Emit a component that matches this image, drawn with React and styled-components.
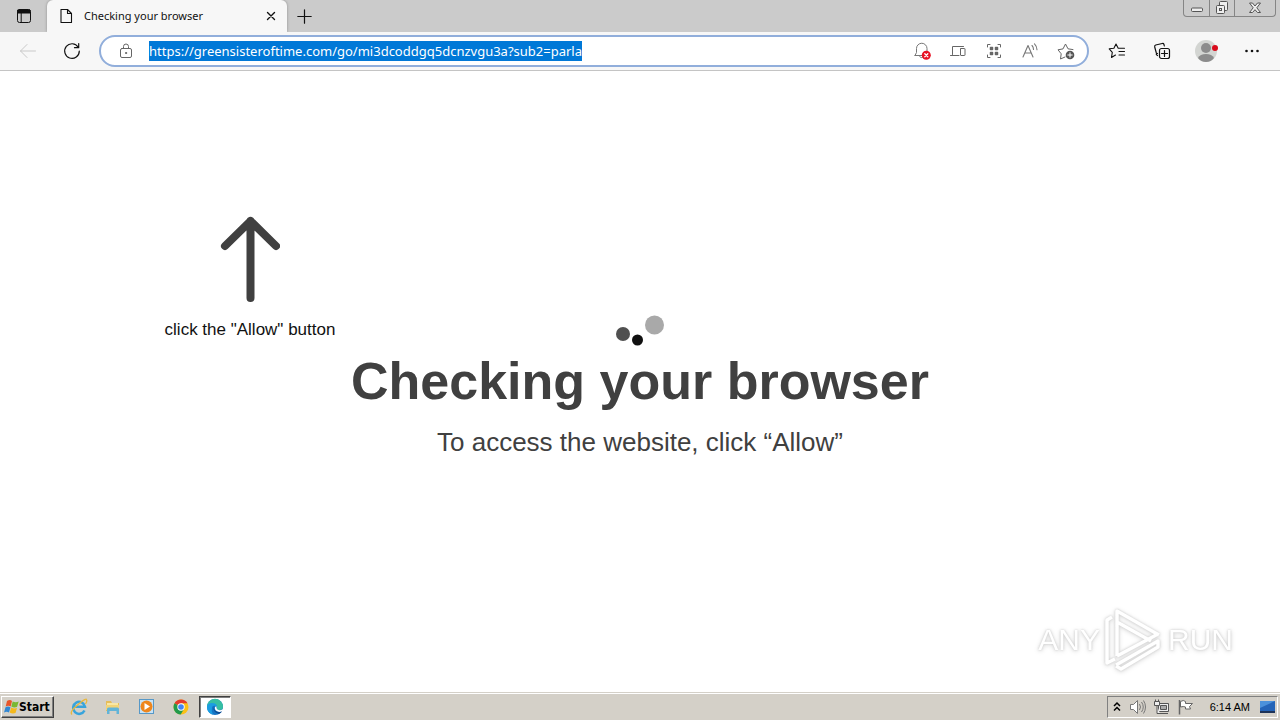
import React from 'react'
import styled, { createGlobalStyle } from 'styled-components'

const GlobalStyle = createGlobalStyle`
  * {
    box-sizing: border-box;
  }
  body {
    margin: 0;
    background: #fff;
    font-family: "Noto Sans", "Open Sans", sans-serif;
  }
  button {
    border: 0;
    padding: 0;
    background: none;
    color: inherit;
    font: inherit;
  }
  svg {
    display: block;
    flex: none;
  }
`

const Screen = styled.div`
  display: flex;
  flex-direction: column;
  min-height: 100vh;
`

/* tab strip */
const TabStrip = styled.div`
  display: flex;
  align-items: flex-start;
  height: 32px;
  background: #cbcbcb;
`

const StripButton = styled.button`
  display: flex;
  align-items: center;
  justify-content: center;
  width: ${props => props.$wide ? '47px' : '34px'};
  height: 32px;
`

const Tab = styled.div`
  display: flex;
  align-items: center;
  width: 240px;
  height: 32px;
  padding: 0 8px 0 12px;
  border-radius: 6px 6px 0 0;
  background: #f7f7f7;
  box-shadow: 0 0 3px #8c8c8c;
  clip-path: inset(0 -4px);
`

const TabTitle = styled.span`
  flex: 1;
  margin-left: 11px;
  color: #111;
  font-size: 11px;
  line-height: 16px;
  white-space: nowrap;
`

const CloseTab = styled.button`
  display: flex;
  align-items: center;
  justify-content: center;
  width: 16px;
  height: 16px;
`

const WindowButtons = styled.div`
  display: flex;
  margin-left: auto;
  margin-right: 4px;
  height: 17px;
  border: 1px solid #858585;
  border-top: 0;
  border-radius: 0 0 4px 4px;
`

const WindowButton = styled.button`
  display: flex;
  align-items: center;
  justify-content: center;
  width: ${props => props.$wide ? '41px' : '25px'};
  border-left: 1px solid #858585;

  &:first-child {
    border-left: 0;
  }
`

/* toolbar */
const Toolbar = styled.div`
  display: flex;
  align-items: center;
  height: 39px;
  padding: 0 10px;
  border-bottom: 1px solid #c4c4c4;
  background: #f7f7f7;
`

const ToolButton = styled.button`
  display: flex;
  align-items: center;
  justify-content: center;
  width: 36px;
  height: 30px;
`

const NavButtons = styled.div`
  display: flex;
  gap: 8px;
  margin-right: 9px;
`

const AddressBar = styled.div`
  display: flex;
  flex: 1;
  align-items: center;
  height: 32px;
  padding: 0 3px 0 17px;
  border: 2px solid #91aedb;
  border-radius: 16px;
  background: #fff;
`

const AddressField = styled.div`
  display: flex;
  flex: 1;
  min-width: 0;
  margin-left: 15px;
`

const AddressInput = styled.input`
  max-width: 100%;
  height: 20px;
  padding: 0;
  border: 0;
  outline: 0;
  background: #0078d7;
  color: #fff;
  font-family: "Noto Sans", "Open Sans", sans-serif;
  font-size: 13px;
  line-height: 20px;
  field-sizing: content;
`

const MenuButtons = styled.div`
  display: flex;
  gap: 9px;
  margin-left: 10px;
`

/* page */
const Page = styled.main`
  position: relative;
  flex: 1;
  padding-top: 145px;
  color: #404040;
  font-family: "Liberation Sans", Arial, sans-serif;
  text-align: center;
`

const TopRow = styled.div`
  display: grid;
  grid-template-columns: 1fr auto 1fr;
  align-items: end;
`

const Hint = styled.div`
  display: flex;
  flex-direction: column;
  align-items: center;
  justify-self: start;
  width: 180px;
  margin-left: 160px;
  padding-bottom: 7px;
`

const HintText = styled.p`
  margin: 17px 0 0;
  color: #111;
  font-size: 17px;
  line-height: 20px;
  white-space: nowrap;
`

const Title = styled.h1`
  margin: 4px 0 0;
  font-size: 52px;
  line-height: 60px;
`

const Subtitle = styled.p`
  margin: 16px 0 0;
  font-size: 26px;
  line-height: 30px;
`

const Watermark = styled.div`
  position: absolute;
  right: 47px;
  bottom: 20px;
  display: flex;
  align-items: center;
  gap: 4px;
  color: #fff;
  font-size: 30px;
  line-height: 62px;
  filter: drop-shadow(0 0 1px #ccc) drop-shadow(0 1px 2px #ddd);
`

/* taskbar */
const Taskbar = styled.footer`
  display: flex;
  align-items: center;
  height: 28px;
  padding: 1px 2px 0 1px;
  border-top: 1px solid #d4d0c8;
  background: #d4d0c8;
  box-shadow: inset 0 1px #fff;
  color: #000;
  font-family: "DejaVu Sans Condensed", "DejaVu Sans", sans-serif;
`

const StartButton = styled.button`
  display: flex;
  align-items: center;
  height: 22px;
  padding: 0 3px 0 1px;
  border: 1px solid;
  border-color: #fff #404040 #404040 #fff;
  box-shadow: inset -1px -1px #808080;
  font-size: 12px;
  font-weight: bold;
`

const Launchers = styled.div`
  display: flex;
  gap: 2px;
  margin-left: 9px;
`

const Launcher = styled.button`
  display: flex;
  align-items: center;
  justify-content: center;
  width: 32px;
  height: 22px;
  border: 1px solid transparent;
  ${props => props.$active && `
    background: #fff;
    border-color: #404040 #fff #fff #404040;
    box-shadow: inset 1px 1px #808080;
  `}
`

const Tray = styled.div`
  display: flex;
  align-items: center;
  height: 22px;
  margin-left: auto;
  padding: 0 1px 0 3px;
  border: 1px solid;
  border-color: #808080 #fff #fff #808080;
`

const TrayButton = styled.button`
  display: flex;
  align-items: center;
  justify-content: center;
  width: ${props => props.$small ? '12px' : '24px'};
  height: 20px;
  margin-right: ${props => props.$small ? '3px' : '0'};
`

const Clock = styled.time`
  margin: 0 9px 0 12px;
  font-family: "Liberation Sans", Arial, sans-serif;
  font-size: 11px;
  line-height: 16px;
  white-space: nowrap;
`

const Icon = ({ size = 18, width = 1, color = '#111', children }) => (
  <svg width={size} height={size} viewBox={`0 0 ${size} ${size}`} fill="none" stroke={color}
    strokeWidth={width} strokeLinecap="round" strokeLinejoin="round" aria-hidden="true">
    {children}
  </svg>
)

const BrowserTabs = () => (
  <TabStrip>
    <StripButton $wide aria-label="Tab actions menu">
      <Icon>
        <rect x="2.5" y="2.5" width="13" height="13" rx="2" />
        <path d="M3 3h12v3H3z" fill="#111" />
        <path d="M6.2 6v9.5" />
      </Icon>
    </StripButton>
    <Tab>
      <Icon size={14} width={1.1}>
        <path d="M2 .5h6.5l4 4v9H2zM8.5 .5v4h4" />
      </Icon>
      <TabTitle>Checking your browser</TabTitle>
      <CloseTab aria-label="Close tab">
        <Icon size={10} width={1.4}><path d="M1.5 1.5l7 7M8.5 1.5l-7 7" /></Icon>
      </CloseTab>
    </Tab>
    <StripButton aria-label="New tab">
      <Icon size={15} width={1.2}><path d="M7.5 .8v13.4M.8 7.5h13.4" /></Icon>
    </StripButton>
    <WindowButtons>
      <WindowButton aria-label="Minimize">
        <svg width="14" height="12" fill="#eee" stroke="#555"><rect x="1.5" y="6" width="11" height="3.5" rx="1" /></svg>
      </WindowButton>
      <WindowButton aria-label="Restore">
        <svg width="14" height="14" fill="#eee" stroke="#555">
          <rect x="4.5" y=".5" width="8" height="9" rx="1" />
          <rect x="1.5" y="4.5" width="8" height="8" rx="1" />
          <rect x="4.5" y="7.5" width="2" height="2" />
        </svg>
      </WindowButton>
      <WindowButton $wide aria-label="Close">
        <svg width="14" height="12" fill="#eee" stroke="#555">
          <path d="M1.5 1h3L7 4l2.500-3h3L8.800 5.800l3.700 4.700h-3L7 7.700l-2.500 2.800h-3l3.700-4.700z" />
        </svg>
      </WindowButton>
    </WindowButtons>
  </TabStrip>
)

const BrowserToolbar = () => (
  <Toolbar>
    <NavButtons>
      <ToolButton aria-label="Back">
        <Icon color="#c9c9c9"><path d="M16.5 9h-15M8 2.500L1.500 9 8 15.500" /></Icon>
      </ToolButton>
      <ToolButton aria-label="Refresh">
        <Icon width={1.2}>
          <path d="M15.200 5.200A7.300 7.300 0 1 0 16.300 9M15.700 1.500v4.200h-4.200" />
        </Icon>
      </ToolButton>
    </NavButtons>
    <AddressBar>
      <Icon color="#666" size={16}>
        <rect x="2.500" y="5.500" width="11" height="9" rx="1.500" />
        <path d="M5.500 5.500V3.500a2.500 2.500 0 0 1 5 0v2" />
        <circle cx="8" cy="10" r=".6" fill="#666" />
      </Icon>
      <AddressField>
        <AddressInput aria-label="Address and search bar" defaultValue="https://greensisteroftime.com/go/mi3dcoddgq5dcnzvgu3a?sub2=parla" />
      </AddressField>
      <ToolButton aria-label="Notifications blocked">
        <Icon color="#777">
          <path d="M2 13.500h8M2 13.500l1.500-3v-4a5 5 0 0 1 10.500 0V9M6.500 14a2 2 0 0 0 3 1.500" />
          <circle cx="13.300" cy="13.300" r="4.500" fill="#e81123" stroke="none" />
          <path d="M11.800 11.800l3 3M14.800 11.800l-3 3" stroke="#fff" strokeWidth="1.300" />
        </Icon>
      </ToolButton>
      <ToolButton aria-label="App available">
        <Icon color="#666">
          <path d="M3.500 12.500v-8h11M1.500 13.500h8.500" />
          <rect x="11.500" y="6.500" width="4.500" height="7" rx=".5" />
        </Icon>
      </ToolButton>
      <ToolButton aria-label="QR code">
        <Icon color="#666">
          <path d="M2.500 5V2.500H5M13 2.500h2.500V5M15.500 13v2.500H13M5 15.500H2.500V13" />
          <path d="M5.500 5.500h2v2h-2zM10.500 5.500h2v2h-2zM5.500 10.500h2v2h-2zM10.500 10.500h2v2h-2z" fill="#777" strokeWidth="1.500" />
        </Icon>
      </ToolButton>
      <ToolButton aria-label="Read aloud">
        <Icon color="#777" width={1.1}>
          <path d="M2 15L7 3.500 12 15M3.700 11h6.600M11 3.500q1.500 1.500 1.500 4M13.500 1.800q2.500 2.500 2.500 6" />
        </Icon>
      </ToolButton>
      <ToolButton aria-label="Add to favorites">
        <Icon color="#666">
          <path d="M8 15l-4.500 2 .7-5.200L1 7.800l5-.9L8.500 2 11 6.800l5 .8" />
          <circle cx="13" cy="13" r="4.300" fill="#555" stroke="none" />
          <path d="M13 10.800v4.400M10.800 13h4.400" stroke="#fff" />
        </Icon>
      </ToolButton>
    </AddressBar>
    <MenuButtons>
      <ToolButton aria-label="Favorites">
        <Icon width={1.1}>
          <path d="M7.500 13l-4 2.500.8-5.200L1.200 6.800l4.700-.6L8 2l2.200 4.200h6.300M11 9.500h5.500M11 13h5.500" />
        </Icon>
      </ToolButton>
      <ToolButton aria-label="Collections">
        <Icon width={1.2}>
          <path d="M4.500 11.500q-1 0-1.300-1L1.700 5q-.4-1.500 1-2l6.500-1.500q1.400-.3 1.800 1l.3 1.500M4.500 13.500q-1-.5-1.300-1.500" />
          <rect x="6.500" y="6.500" width="10" height="10" rx="2" />
          <path d="M11.500 8.500v6M8.500 11.500h6" />
        </Icon>
      </ToolButton>
      <ToolButton aria-label="Profile">
        <svg width="26" height="24" aria-hidden="true">
          <circle cx="12" cy="12" r="11" fill="#d3d5d2" />
          <circle cx="12" cy="9" r="5" fill="#8c8c8c" />
          <path d="M4 19q2-4 8-4t8 4q-3 4-8 4t-8-4z" fill="#8c8c8c" />
          <circle cx="21" cy="9" r="3" fill="#d90b1c" />
        </svg>
      </ToolButton>
      <ToolButton aria-label="Settings and more">
        <Icon width={0}>
          <g fill="#111"><circle cx="3.500" cy="9" r="1.300" /><circle cx="9" cy="9" r="1.300" /><circle cx="14.500" cy="9" r="1.300" /></g>
        </Icon>
      </ToolButton>
    </MenuButtons>
  </Toolbar>
)

const PageContent = () => (
  <Page>
    <TopRow>
      <Hint>
        <svg width="60" height="87" fill="none" stroke="#404040" strokeWidth="8" strokeLinecap="round" strokeLinejoin="round" aria-hidden="true">
          <path d="M30.500 82V5M5 30L30.500 5 56 30" />
        </svg>
        <HintText>click the "Allow" button</HintText>
      </Hint>
      <svg width="50" height="32" aria-label="Loading" role="img">
        <circle cx="8" cy="19" r="7" fill="#505050" />
        <circle cx="22.500" cy="25" r="5.500" fill="#101010" />
        <circle cx="39.500" cy="10" r="9.500" fill="#a9a9a9" />
      </svg>
    </TopRow>
    <Title>Checking your browser</Title>
    <Subtitle>To access the website, click “Allow”</Subtitle>
    <Watermark>
      <span>ANY</span>
      <svg width="60" height="64" fill="none" stroke="#fff" strokeWidth="3.500" strokeLinejoin="round" aria-hidden="true">
        <path d="M13 48V3l42 24M13 14l34 19M13 48l41-22" />
        <path d="M8 9l-5 3v43l8-4M12 58l5 3 37-22v-6L12 57" />
      </svg>
      <span>RUN</span>
    </Watermark>
  </Page>
)

const WindowsTaskbar = () => (
  <Taskbar>
    <StartButton>
      <svg width="16" height="16" aria-hidden="true">
        <path d="M4 2q3-2 5 0L7.700 7.500q-2.500-1.500-5 0z" fill="#e8562a" />
        <path d="M9.700 2.500q3 1.500 6 0L14 8q-3 1.200-5.700-.5z" fill="#7ab833" />
        <path d="M2.500 8.200q2.500-1.500 5 0L6 13.500q-2.500-1.500-5 0z" fill="#3187d3" />
        <path d="M8.200 8.500q3 1.500 5.800.5l-1.500 5q-3 1.200-5.800-.5z" fill="#f5b91c" />
      </svg>
      Start
    </StartButton>
    <Launchers>
      <Launcher aria-label="Internet Explorer">
        <svg width="18" height="18" fill="none" aria-hidden="true">
          <path d="M14.500 12.500A6 6 0 1 1 15 8.800H4" stroke="#38a4dc" strokeWidth="2.500" />
          <path d="M2 16.500Q-1 14 8 6.500T16.500 2q1 1-1 4" stroke="#e9b83c" strokeWidth="1.300" />
        </svg>
      </Launcher>
      <Launcher aria-label="Windows Explorer">
        <svg width="18" height="18" aria-hidden="true">
          <path d="M2 3h5l1 2h7v8H2z" fill="#e6bd59" />
          <path d="M3 5h11v5H3z" fill="#f9e7a4" />
          <path d="M2 7h13v5H2z" fill="#f2d478" />
          <path d="M3 16v-5q0-1.500 1.500-1.500h9q1.500 0 1.500 1.500v5h-2.500v-3h-7v3z" fill="#62b4d8" />
        </svg>
      </Launcher>
      <Launcher aria-label="Windows Media Player">
        <svg width="18" height="18" aria-hidden="true">
          <rect x="1.500" y="1.500" width="14" height="14" fill="#c8e3f6" stroke="#5798c7" />
          <circle cx="8.500" cy="8.500" r="6" fill="#ee861d" />
          <path d="M6.500 5l5.500 3.500-5.500 3.500z" fill="#fff" />
        </svg>
      </Launcher>
      <Launcher aria-label="Google Chrome">
        <svg width="18" height="18" aria-hidden="true">
          <circle cx="9" cy="9" r="7.500" fill="#fbc116" />
          <path d="M9 9L2.500 5.300A7.500 7.500 0 0 1 15.500 5.300H9z" fill="#e33b2e" />
          <path d="M9 9L2.500 5.300A7.500 7.500 0 0 0 8.700 16.500L12 11z" fill="#229a4b" />
          <circle cx="9" cy="9" r="3.700" fill="#fff" />
          <circle cx="9" cy="9" r="2.800" fill="#4285f4" />
        </svg>
      </Launcher>
      <Launcher $active aria-label="Microsoft Edge">
        <svg width="18" height="18" aria-hidden="true">
          <circle cx="9" cy="9" r="8" fill="#1474c4" />
          <path d="M1 9a8 8 0 0 1 16-.5q0 3.500-3.500 3.500-3 0-3-1.500 1-1.500 0-3Q6 4 1 9z" fill="#36bfa3" />
          <path d="M1 9Q1.500 5 6 5q5 0 5 4-3-2.500-5 0-1 4 1 7.500Q1 15 1 9z" fill="#1b9de2" />
          <path d="M8 8q-1 5 4 6 2.500.3 4-1.500 0 2-3 3.500Q6 14 8 8z" fill="#0c4a91" />
          <path d="M10.600 8.500q-.8 3 3 3.700 2 0 3-1.200l.4 1.800q-2 1.400-4.500 1Q8 12.500 9 8.700z" fill="#fff" />
        </svg>
      </Launcher>
    </Launchers>
    <Tray>
      <TrayButton $small aria-label="Show hidden icons">
        <svg width="8" height="12" fill="none" stroke="#000" strokeWidth="1.500" aria-hidden="true">
          <path d="M1 5l3-3 3 3M1 9.500l3-3 3 3" />
        </svg>
      </TrayButton>
      <TrayButton aria-label="Volume">
        <svg width="18" height="16" fill="none" stroke="#777" aria-hidden="true">
          <path d="M1.500 5.500h3l4-4v13l-4-4h-3z" fill="#fff" />
          <path d="M10.500 5q2 3 0 6M12.500 3q3.500 5 0 10M14.500 1.500q4 6.500 0 13" />
        </svg>
      </TrayButton>
      <TrayButton aria-label="Network">
        <svg width="18" height="16" fill="#eee" stroke="#555" aria-hidden="true">
          <path d="M5.500 4.500h10v8h-10zM7 14.500h8" />
          <path d="M7.500 6.500h6v4h-6z" fill="#aaa" />
          <path d="M1.500 2.500h5v4h-5zM2.500.5v2M5.500.5v2M4 6.500v8h3" />
        </svg>
      </TrayButton>
      <TrayButton aria-label="Action Center">
        <svg width="18" height="16" fill="#fff" stroke="#666" aria-hidden="true">
          <path d="M3.500 2.500q3-2 5 0v2h7l-3 3 1 2.500h-5V8q-2-1-5 0z" />
          <path d="M2.500 1v14.500" strokeWidth="1.500" />
        </svg>
      </TrayButton>
      <Clock>6:14 AM</Clock>
      <svg width="17" height="16" aria-hidden="true">
        <path d="M1 2h15v10H1z" fill="#2464b8" />
        <path d="M1 2h15L1 9z" fill="#4b91db" />
        <path d="M1 12h15v2H1z" fill="#1d3358" />
      </svg>
    </Tray>
  </Taskbar>
)

export default function App() {
  return (
    <Screen>
      <GlobalStyle />
      <BrowserTabs />
      <BrowserToolbar />
      <PageContent />
      <WindowsTaskbar />
    </Screen>
  )
}
